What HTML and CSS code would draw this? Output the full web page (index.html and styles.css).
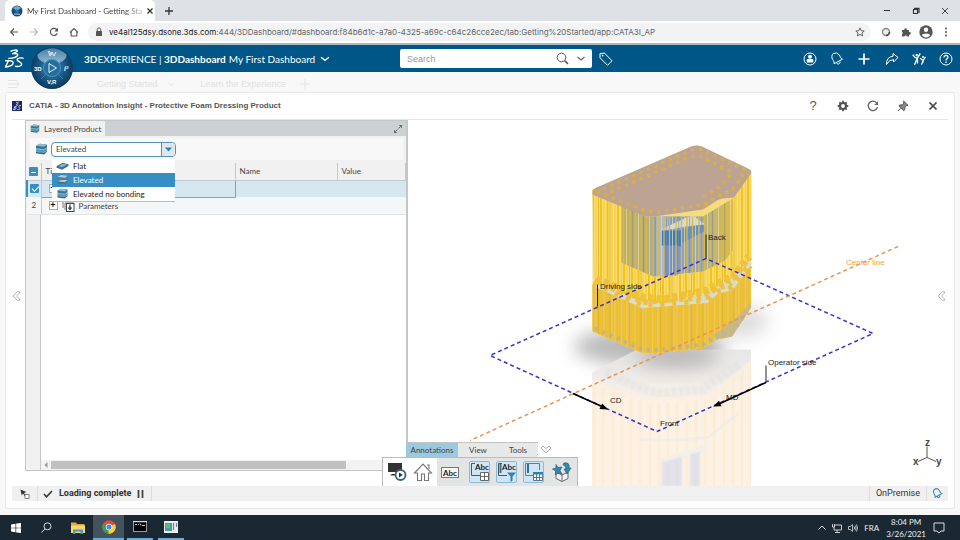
FILE: index.html
```
<!DOCTYPE html>
<html lang="en">
<head>
<meta charset="utf-8">
<meta name="viewport" content="width=device-width, initial-scale=1">
<title>My First Dashboard - Getting Started</title>
<link rel="stylesheet" href="styles.css">
</head>
<body>
<div class="tabstrip">
  <div class="browser-tab">
    <svg class="favicon" viewBox="0 0 12 12"><circle cx="6" cy="6" r="5.5" fill="#174a75"/><path d="M2 3a5 5 0 0 1 8 0L6 6z" fill="#78a9cb"/><circle cx="6" cy="6" r="1.8" fill="#2b79ad"/><path d="M3 9l6 .2" stroke="#b9d5e6"/></svg>
    <span class="browser-title">My First Dashboard - Getting Sta</span>
    <button class="icon-btn" aria-label="Close tab"><svg width="8" height="8" viewBox="0 0 8 8"><path d="M1.5 1.5l5 5m0-5l-5 5" stroke="#333" stroke-width="1.3"/></svg></button>
  </div>
  <button class="icon-btn new-tab" aria-label="New tab"><svg width="8" height="8" viewBox="0 0 8 8"><path d="M4 0v8M0 4h8" stroke="#333" stroke-width="1.3"/></svg></button>
  <div class="window-buttons">
    <button class="icon-btn" aria-label="Minimize"><svg width="8" height="8" viewBox="0 0 8 8"><path d="M1 3.5h6" stroke="#333"/></svg></button>
    <button class="icon-btn" aria-label="Restore"><svg width="8" height="8" viewBox="0 0 8 8"><path d="M1.5 2.5h4v4h-4zM2 1.3h5V6" fill="none" stroke="#333" stroke-width="1.2"/></svg></button>
    <button class="icon-btn" aria-label="Close"><svg width="8" height="8" viewBox="0 0 8 8"><path d="M1 1l6 6m0-6L1 7" stroke="#333" stroke-width=".9"/></svg></button>
  </div>
</div>
<div class="browser-bar">
  <div class="nav-buttons">
    <button class="icon-btn" aria-label="Back"><svg width="10" height="10" viewBox="0 0 10 10"><path d="M9 5H1.5M5 1.5L1.500 5 5 8.500" fill="none" stroke="#555" stroke-width="1.1"/></svg></button>
    <button class="icon-btn" aria-label="Forward"><svg width="10" height="10" viewBox="0 0 10 10"><path d="M1 5h7.500M5 1.500L8.500 5 5 8.500" fill="none" stroke="#b5b7b9" stroke-width="1.100"/></svg></button>
    <button class="icon-btn" aria-label="Reload"><svg width="10" height="10" viewBox="0 0 10 10"><path d="M8.300 6.300A3.600 3.600 0 1 1 8 2.900" fill="none" stroke="#555" stroke-width="1.200"/><path d="M9 .8v3.700H5.400z" fill="#555"/></svg></button>
    <button class="icon-btn" aria-label="Home"><svg width="10" height="10" viewBox="0 0 10 10"><path d="M1 5.500L5 1.500l4 4M2.200 5v4h5.600V5" fill="none" stroke="#555" stroke-width="1.100"/></svg></button>
  </div>
  <div class="address">
    <svg width="8" height="10" viewBox="0 0 8 10"><rect x="1" y="4" width="6" height="5" rx=".6" fill="#555"/><path d="M2.300 4V2.600a1.700 1.700 0 0 1 3.400 0V4" fill="none" stroke="#555"/></svg>
    <p class="url"><b>ve4al125dsy.dsone.3ds.com</b>:444/3DDashboard/#dashboard:f84b6d1c-a7a0-4325-a69c-c64c26cce2ec/tab:Getting%20Started/app:CATA3I_AP</p>
    <button class="icon-btn" aria-label="Bookmark"><svg width="10" height="10" viewBox="0 0 10 10"><path d="M5 .9l1.200 2.800 3 .3-2.300 2 .8 3L5 7.400 2.300 9l.8-3-2.300-2 3-.3z" fill="none" stroke="#555" stroke-width=".9"/></svg></button>
  </div>
  <div class="extensions">
    <button class="icon-btn" aria-label="Extension"><svg width="10" height="10" viewBox="0 0 10 10"><circle cx="5" cy="5" r="3.500" fill="#eee" stroke="#888" stroke-width="1.400"/><path d="M8.500 5A3.500 3.500 0 0 1 5 8.500" fill="none" stroke="#444" stroke-width="1.500"/></svg></button>
    <button class="icon-btn" aria-label="Extensions"><svg width="10" height="10" viewBox="0 0 10 10"><path d="M1 3h2.300a1.400 1.400 0 1 1 2.700 0H8v2a1.400 1.400 0 1 1 0 2.700V9.500H6a1.300 1.300 0 0 0-2.500 0H1V7.300a1.300 1.300 0 0 0 0-2.300z" fill="#555"/></svg></button>
    <button class="icon-btn" aria-label="Profile"><svg width="14" height="14" viewBox="0 0 14 14"><circle cx="7" cy="7" r="6.700" fill="#54575b"/><circle cx="7" cy="4.800" r="2.200" fill="#fff"/><path d="M2.700 10a5 3.200 0 0 1 8.600 0 5 5 0 0 1-8.600 0" fill="#fff"/></svg></button>
    <button class="icon-btn" aria-label="Menu"><svg width="4" height="10" viewBox="0 0 4 10"><g fill="#555"><circle cx="2" cy="1.500" r="1"/><circle cx="2" cy="5" r="1"/><circle cx="2" cy="8.500" r="1"/></g></svg></button>
  </div>
</div>
<header class="topbar">
  <svg class="ds-logo" viewBox="0 0 20 20"><g fill="none" stroke="#fff" stroke-width="1.400" stroke-linecap="round" stroke-linejoin="round"><path d="M7 2.200c3-1.400 6-1.400 6.300-.6.300 1-2.300 2.300-4.800 3 3.600-.2 5.500.3 5.300 1.300-.4 2-4.800 3.400-9 3.500"/><path d="M4.500 11.500L1.500 18c4.200-.1 7.800-1.800 7.700-4.400-.1-1.900-3.300-2.300-7.500-1.800"/><path d="M19 9.200c-2.800-.8-5.900 0-5.900 1.600 0 1.500 4.700 2.400 4.600 4.400-.1 1.700-3 2.700-6.200 2.100"/></g></svg>
  <button class="compass" aria-label="Compass">
    <svg width="44" height="44" viewBox="0 0 44 44">
      <defs><radialGradient id="orb" cx=".5" cy=".48" r=".55"><stop offset="0" stop-color="#4d9bc4"/><stop offset=".55" stop-color="#18598a"/><stop offset="1" stop-color="#0b3456"/></radialGradient><linearGradient id="cap" x2="0" y2="1"><stop offset="0" stop-color="#4d84a8"/><stop offset="1" stop-color="#9ec6db"/></linearGradient></defs>
      <circle cx="22" cy="22" r="21" fill="url(#orb)"/>
      <path d="M7.500 8.500a20 20 0 0 1 29 0c.6 3-3 7-7.800 8.600a9.500 9.500 0 0 0-13.400 0C10 15 7 12 7.500 8.500z" fill="url(#cap)" opacity=".9"/>
      <circle cx="22" cy="22" r="8.500" fill="#236e9d" stroke="#4f91b8"/>
      <path d="M15 29l-4 4m18-4l4 4M14 16l-3-3m19 3l3-3" stroke="#508fb5" stroke-width=".7"/>
      <path d="M19 17.500v9l7.500-4.500z" fill="none" stroke="#fff" stroke-width=".9"/>
      <g fill="#fff"><text x="4" y="25" font-size="6" font-weight="bold">3D</text><text x="17" y="38" font-size="6" font-weight="bold">V,R</text><text x="34" y="25" font-size="7" font-weight="bold" font-style="italic">i²</text></g>
      <path d="M18 5l2 5 2-4 2 4 2-4M19 5l3 4" stroke="#dcebf2" fill="none"/>
    </svg>
  </button>
  <h1 class="brand"><b>3D</b>EXPERIENCE | <b>3DDashboard</b></h1>
  <button class="dash-name">My First Dashboard <svg width="10" height="6" viewBox="0 0 10 6"><path d="M1 1.300l4 3 4-3" fill="none" stroke="#fff" stroke-width="1.400"/></svg></button>
  <form class="search">
    <input type="search" placeholder="Search" aria-label="Search">
    <button type="button" class="icon-btn" aria-label="Run search"><svg width="13" height="13" viewBox="0 0 13 13"><circle cx="5.500" cy="5.500" r="4.300" fill="none" stroke="#555"/><path d="M8.500 8.500l3.500 3.500" stroke="#555" stroke-width="1.600"/></svg></button>
    <button type="button" class="icon-btn" aria-label="Search options"><svg width="8" height="6" viewBox="0 0 8 6"><path d="M.5 1l3.500 3 3.500-3" fill="none" stroke="#666" stroke-width="1.200"/></svg></button>
  </form>
  <button class="icon-btn tag" aria-label="Tags"><svg width="14" height="14" viewBox="0 0 14 14"><path d="M1 1.500l4.500-.4 7.500 7.700-4.500 4.500L1 5.800z" fill="none" stroke="#fff"/><circle cx="3.600" cy="3.600" r=".9" fill="#fff"/></svg></button>
  <nav class="top-icons" aria-label="User tools">
    <button class="icon-btn" aria-label="Profile"><svg width="14" height="14" viewBox="0 0 14 14"><circle cx="7" cy="7" r="6" fill="none" stroke="#fff"/><circle cx="7" cy="4.800" r="2" fill="#fff"/><path d="M3.700 10.500V8.200q0-1.200 1.300-1.200h4q1.300 0 1.300 1.200v2.300z" fill="#fff"/></svg></button>
    <button class="icon-btn" aria-label="Notifications"><svg width="14" height="14" viewBox="0 0 14 14"><path d="M3.200 1.600q3.500-2 6 1.200c1.500 2 .8 3.500 3.300 4.400L4 11.700c.7-2.600-1.500-3.600-2-5.700-.4-2 .2-3.500 1.200-4.400zM6.500 11c1.500 2 3.800 1 3.500-1.500" fill="none" stroke="#fff"/></svg></button>
    <button class="icon-btn" aria-label="Add"><svg width="14" height="14" viewBox="0 0 14 14"><path d="M7 1.500v11M1.500 7h11" stroke="#fff" stroke-width="1.700"/></svg></button>
    <button class="icon-btn" aria-label="Share"><svg width="14" height="14" viewBox="0 0 14 14"><path d="M8 1.500l5 4-4.500 4.500V7.600Q4 7.500 1.500 12.500 1.200 5 8 4.200z" fill="none" stroke="#fff"/></svg></button>
    <button class="icon-btn" aria-label="Communities"><svg width="14" height="14" viewBox="0 0 14 14"><path d="M.7 2.700q2 3.300 4.800 3.800M8.300 1.500Q4.500 6 2.500 13m3-6.500v5M8.300 6q1 2 2.700 2.200M13.500 4.800q-2.500 3-4 7.800M11 8.200v2.600" fill="none" stroke="#fff" stroke-width="1.300"/><circle cx="4.700" cy="3" r="1.200" fill="#fff"/><circle cx="11" cy="5" r="1" fill="#fff"/></svg></button>
    <button class="icon-btn" aria-label="Help"><svg width="14" height="14" viewBox="0 0 14 14"><circle cx="7" cy="7" r="6" fill="none" stroke="#fff"/><path d="M5 5.500C5 2.600 9.300 2.800 9 5.500 8.800 6.800 7 6.800 7 8.400M7 9.500v1.500" fill="none" stroke="#fff" stroke-width="1.300"/></svg></button>
  </nav>
</header>
<nav class="dash-tabs" aria-label="Dashboard tabs">
  <svg width="12" height="10" viewBox="0 0 12 10"><path d="M0 1.500h8M0 5h10M0 8.500h8M8 1l3 4-3 4" fill="none" stroke="#e3e3e3"/></svg>
  <a href="#" class="dash-current">Getting Started</a>
  <svg width="7" height="5" viewBox="0 0 7 5"><path d="M.5 1l3 2.500L6.500 1" fill="none" stroke="#e3e3e3"/></svg>
  <a href="#" class="dash-next">Learn the Experience</a>
  <svg width="10" height="10" viewBox="0 0 10 10"><path d="M5 0v10M0 5h10" stroke="#e3e3e3"/></svg>
</nav>

<main class="widget">
  <div class="widget-head">
    <svg class="app-icon" viewBox="0 0 10 10"><rect width="10" height="10" fill="#1b2a70"/><path d="M4 1.500q3-.6 2.300.4T4.500 3.500q2 0 .6 1.200T2.500 5.500M2.700 6L1.500 8.700q3 0 2.700-2zM9 4.500q-2.600-.2-2.200 1T8 7.700q-.6 1-2.600.8" fill="none" stroke="#fff" stroke-width=".7"/></svg>
    <h2>CATIA - 3D Annotation Insight - Protective Foam Dressing Product</h2>
    <div class="widget-tools">
      <button class="help-btn">?</button>
      <button class="icon-btn" aria-label="Settings"><svg width="12" height="12" viewBox="0 0 12 12"><circle cx="6" cy="6" r="3" fill="none" stroke="#555" stroke-width="2.200"/><path d="M6 .7v2M6 9.300v2M.7 6h2M9.300 6h2M2.300 2.300l1.300 1.300M8.400 8.400l1.300 1.300M9.700 2.300L8.400 3.600M3.600 8.400L2.300 9.700" stroke="#555" stroke-width="1.800"/></svg></button>
      <button class="icon-btn" aria-label="Refresh"><svg width="12" height="12" viewBox="0 0 12 12"><path d="M10.500 7A4.700 4.700 0 1 1 9.500 2.800" fill="none" stroke="#666" stroke-width="1.300"/><path d="M11 1v4H7.300z" fill="#666"/></svg></button>
      <button class="icon-btn" aria-label="Pin"><svg width="12" height="12" viewBox="0 0 12 12"><path d="M6.500 1l4.500 4.300-1.300.4-1.900 1.800-.1 2.400-1 .8L2 6l.8-1 2.500-.2L7 3zM3.700 8.200L1 11" fill="#888" stroke="#555"/></svg></button>
      <button class="icon-btn" aria-label="Close widget"><svg width="10" height="10" viewBox="0 0 10 10"><path d="M1.500 1.500l7 7m0-7l-7 7" stroke="#444" stroke-width="1.700"/></svg></button>
    </div>
  </div>

  <div class="workspace">
    <button class="edge-toggle edge-left" aria-label="Show left panel"><svg width="9" height="10" viewBox="0 0 9 10"><path d="M5.500.7L1 5l4.500 4.300h2V8L4.500 5l3-3V.7z" fill="#fff" stroke="#aaa" stroke-width=".9"/></svg></button>
    <section class="panel">
      <div class="panel-tabs">
        <button class="panel-tab"><svg width="10" height="11" viewBox="0 0 13 12"><use href="#layers"/></svg>Layered Product</button>
        <button class="icon-btn expand" aria-label="Expand"><svg width="8" height="8" viewBox="0 0 8 8"><path d="M4.800 0H8v3.200zM0 4.800V8h3.200z" fill="#666"/><path d="M1.500 6.500l5-5" stroke="#666" stroke-dasharray="2.800 1.500"/></svg></button>
      </div>
      <div class="panel-tools">
        <svg width="13" height="12" viewBox="0 0 13 12"><g id="layers"><path d="M1 8l3-1.500 8 .3v2L9 11.500 1 10.300z" fill="#2f6684"/><path d="M1 5.500L4 4l8 .3v2.400L9 9 1 8z" fill="#4b9bc2"/><path d="M1 2.800L5 .8l7 .9v2.500L9 6.300l-8-1z" fill="#3a7391"/><path d="M1 2.800L5 .8l7 .9-3 2z" fill="#8abed7"/><path d="M1 5.800l8 .9 3-1.900M1 8.500l8 .9 3-2" fill="none" stroke="#b9d8e6" stroke-width=".6"/></g></svg>
        <div class="combo">
          <input type="text" value="Elevated" aria-label="View mode">
          <button aria-label="Open list"><svg width="7" height="5" viewBox="0 0 7 5"><path d="M0 .5h7L3.500 4.500z" fill="#2c7eb4"/></svg></button>
          <ul class="menu" role="listbox" aria-label="View modes">
            <li role="option"><svg width="13" height="11" viewBox="0 0 13 12"><path d="M0 6.500L7 3l6 1.500v2L6 10.500 0 8.500z" fill="#3b718e"/><path d="M2 6.500L7.500 4l4 1L6 8z" fill="#85b7cf"/></svg>Flat</li>
            <li role="option" aria-selected="true"><svg width="13" height="11" viewBox="0 0 13 12"><path d="M1 3l4-2 7 1v2.500L9 6.500 1 5.500z" fill="#547f97"/><path d="M1 8l4-2 7 .6v2L9 11l-8-1z" fill="#456f87"/><path d="M1 3l4-2 7 1-3 2zM1 8l4-1.500 7 .1L9 9z" fill="#b4cdd9"/></svg>Elevated</li>
            <li role="option"><svg width="13" height="11" viewBox="0 0 13 12"><use href="#layers"/></svg>Elevated no bonding</li>
          </ul>
        </div>
      </div>
      <div class="tree">
        <table>
          <colgroup><col class="col-check"><col class="col-title"><col class="col-name"><col></colgroup>
          <thead><tr><th><input type="checkbox" class="mixed" aria-label="Select all"></th><th>Title</th><th>Name</th><th>Value</th></tr></thead>
          <tbody>
            <tr class="picked"><td><input type="checkbox" checked aria-label="Select row 1"></td><td class="focused"><button class="toggle" aria-label="Collapse">+</button></td><td></td><td></td></tr>
            <tr class="alt"><td>2</td><td><div class="node"><button class="toggle" aria-label="Expand">+</button><svg width="13" height="12" viewBox="0 0 13 12"><path d="M1 8V1h8M3 10V3h9" fill="none" stroke="#777"/><rect x="4.500" y="3.500" width="7.500" height="8" fill="#fff" stroke="#444"/><path d="M8 4.500V9M6.500 7.500L8 9.500l1.500-2" stroke="#345" fill="none" stroke-width="1.300"/></svg>Parameters</div></td><td></td><td></td></tr>
          </tbody>
        </table>
        <div class="tree-blank"></div>
        <div class="scroll"><svg width="4" height="6" viewBox="0 0 4 6"><path d="M3.500 0v6L.5 3z" fill="#999"/></svg><div class="scroll-track"><div class="scroll-thumb"></div></div></div>
      </div>
    </section>

    <section class="viewer" aria-label="3D view">
      <svg class="scene" viewBox="408 120 540 367" preserveAspectRatio="xMidYMid slice">
        <defs>
          <filter id="soft" x="-30%" y="-60%" width="160%" height="220%"><feGaussianBlur stdDeviation="9"/></filter>
          <filter id="hazy"><feGaussianBlur stdDeviation="1"/></filter>
          <pattern id="rods" width="31" height="400" patternUnits="userSpaceOnUse" x="592">
            <path d="M1 0v400M9 0v400M15.500 0v400M26 0v400" stroke="#f4c414" stroke-width="2"/>
            <path d="M4 0v400M12 0v400M20 0v400M23 0v400M29.500 0v400" stroke="#f7cf3c" stroke-width="1.300"/>
            <path d="M6.500 0v400M18 0v400" stroke="#dca91a" stroke-width=".7"/>
          </pattern>
          <pattern id="thin" width="23" height="400" patternUnits="userSpaceOnUse" x="622">
            <path d="M1.500 0v400M8 0v400M13.500 0v400M19 0v400" stroke="#dcbb3a" stroke-width="1.300"/>
            <path d="M4.500 0v400M16.500 0v400" stroke="#e3d9a3" stroke-width=".8"/>
            <path d="M10.700 0v400M21.500 0v400" stroke="#7c8da0" stroke-width=".6"/>
          </pattern>
          <pattern id="ghost" width="37" height="400" patternUnits="userSpaceOnUse" x="592">
            <path d="M2 0v400M11 0v400M21 0v400M30 0v400" stroke="#fde9c8" stroke-width="2.500"/><path d="M6 0v400M16 0v400M26 0v400M34 0v400" stroke="#fdf7ee" stroke-width="1"/>
          </pattern>
          <linearGradient id="fade" x2="0" y2="1"><stop offset="0" stop-color="#e6e5e3"/><stop offset=".22" stop-color="#eeebe7"/><stop offset=".4" stop-color="#faf0e3"/><stop offset="1" stop-color="#fcf6ee"/></linearGradient>
          <linearGradient id="glass" x2="1"><stop offset="0" stop-color="#c4ae55"/><stop offset=".25" stop-color="#b3ad86"/><stop offset=".33" stop-color="#8aa3cc"/><stop offset=".5" stop-color="#7d9ad2"/><stop offset=".7" stop-color="#a3aaac"/><stop offset="1" stop-color="#e3bd33"/></linearGradient>
        </defs>
        <ellipse cx="650" cy="347" rx="76" ry="20" fill="#777" opacity=".5" filter="url(#soft)"/>
        <ellipse cx="742" cy="322" rx="26" ry="16" fill="#777" opacity=".25" filter="url(#soft)"/>
        <path d="M592 373l45-23 114 0V490H592z" fill="url(#fade)" opacity=".92"/>
        <path d="M592 380l20 8 38 12 58-4 43-36V490H592z" fill="#fcf0df" opacity=".7"/>
        <path d="M592 384l20 8 38 12 58-4 43-36V490H592z" fill="url(#ghost)" opacity=".55"/>
        <path d="M606 372l30 15 22 7 44-4 38-26" fill="none" stroke="#dedddc" stroke-width="9" stroke-dasharray="5 2" opacity=".4" filter="url(#hazy)"/>
        <path d="M640 440l30 1 38-3 30-24" fill="none" stroke="#efebe8" stroke-width="3" opacity=".7"/>
        <path d="M661 459l46-15v8l-46 14z" fill="#f4efe9"/>
        <path d="M662 463l20-6v30h-20zM690 455l10-3v35h-10z" fill="#c9d3ef" opacity=".5" filter="url(#hazy)"/>
        <ellipse cx="677" cy="357" rx="42" ry="12" fill="#777" opacity=".4" filter="url(#soft)"/>

        <path d="M592.500 190L697 146l54 27v135l-19 29-15 3-14 9-50 5-12-1-48.500-21z" fill="#f7dc7c"/>
        <path d="M621 205l24 12h58l30-18v52l-8 10-22 11-50 5-32-14z" fill="url(#glass)"/>
        <path d="M656 217h12v60h-12z" fill="#b5bfd0" opacity=".8"/>
        <path d="M661 231h20v16l-20-1z" fill="#377bcc"/>
        <path d="M681 230l23-6v8l-23 12z" fill="#6790c4"/>
        <path d="M660 231q22-12 33-15l8 6 5 3q-20 1-30 4z" fill="#d5dad4"/>
        <path d="M664 246h14l0 30h-14z" fill="#6f90d8"/>
        <path d="M621 205l24 12h58l30-18v52l-8 10-22 11-50 5-32-14z" fill="url(#thin)"/>
        <path d="M592.500 190l29 13v60l32 14 50-5 22-11 8-10v-52l18-30v90l-18 28-25 12-64 8-50.500-25z" fill="url(#rods)"/>
        <path d="M593 283l49 17 22 2 43-9 15-9 10-5 19-20v8l-19 26-16 2-9 9-64 6-50-24z" fill="#d9d9ca"/>
        <path d="M596 280l46 18 22 2 43-9 15-9 12-5 15-20" fill="none" stroke="#eec33a" stroke-width="8" stroke-dasharray="5 3"/>
        <path d="M594 283l48 21 22 1 43-6 10-8 15-5 17-21" fill="none" stroke="#edc23a" stroke-width="9" stroke-dasharray="4 5"/>
        <path d="M592.500 286l50 23 64-6 10-9 16-3 18.500-27v44l-19 29-15 3-14 9-50 5-12-1-48.500-21z" fill="#e6bd4c"/>
        <path d="M592.500 286l50 23 64-6 10-9 16-3 18.500-27v44l-19 29-15 3-14 9-50 5-12-1-48.500-21z" fill="url(#rods)" opacity=".75"/>
        <path d="M593 285l50 22 64-5 10-9 15-4 19-26" fill="none" stroke="#dcdccb" stroke-width="3"/>
        <path d="M593 284l50 22 64-5 10-9 15-4 19-26" fill="none" stroke="#edc23a" stroke-width="5" stroke-dasharray="4 8"/>
        <path d="M595 329l45 20 13 2 50-6 14-9 15-3 17-24" fill="none" stroke="#b8b0a0" stroke-width="4" stroke-dasharray="3 5" opacity=".85"/>
        <path d="M717 340l15-3 19-29v-5l-15 16-23 17z" fill="#bcb5a1" opacity=".7"/>
        <path d="M592.500 195v-3q0-2 3-3.500L691 147q5-2 11 0l46 22q4 2 3 5l-17 24-12 1-5 2-14 9-49 7h-9z" fill="#bca392"/>
        <g fill="none" stroke-linecap="round">
          <g stroke="#e7b52d" stroke-width="3.500" stroke-dasharray="0 8"><path id="outer-holes" d="M597 192l94-41 10-1 45 21-14 20-13 5-15 9-48 8-11-2z"/><path id="inner-holes" d="M612 192l79-35 8-1 33 17-13 15-18 11"/></g>
          <g stroke="#bca392" stroke-width="1.500" stroke-dasharray="0 8"><use href="#outer-holes"/><use href="#inner-holes"/></g>
        </g>
        <path d="M597.500 285v22M706 235v24M766 366v17" stroke="#222"/>
        <g fill="none" stroke-width="1.500" stroke-dasharray="4 3">
          <path d="M706 259L490 356l167 76 216-98z" stroke="#3932cb"/>
          <path d="M898 247L470 441" stroke="#e99552"/>
        </g>
        <path d="M573 394l29 13M766 383l-46 21" stroke="#000" stroke-width="1.500"/>
        <path d="M608 410l-8.500-.5 2.700-5.500zM713 407l6-5.700 2.500 5.500z"/>
        <g class="labels"><text x="708" y="240">Back</text><text x="600" y="289">Driving side</text><text x="768" y="365">Operator side</text><text x="610" y="403">CD</text><text x="726" y="400">MD</text><text x="660" y="426">Front</text><text x="846" y="265" class="center-label">Center line</text></g>
        <path d="M927 447v11l-9 4M927 458l9 4" fill="none" stroke="#555"/>
        <g class="axes"><text x="925" y="446">z</text><text x="913" y="465">x</text><text x="936" y="465">y</text></g>
      </svg>
      <button class="edge-toggle edge-right" aria-label="Show right panel"><svg width="9" height="10" viewBox="0 0 9 10"><path d="M5.500.7L1 5l4.500 4.300h2V8L4.500 5l3-3V.7z" fill="#fff" stroke="#aaa" stroke-width=".9"/></svg></button>
    </section>

    <div class="dock">
      <div class="dock-tabs">
        <button class="dock-tab dock-active">Annotations</button><button class="dock-tab">View</button><button class="dock-tab">Tools</button>
        <button class="icon-btn dock-fold" aria-label="Fold"><svg width="12" height="9" viewBox="0 0 12 9"><path d="M1 3L3 1l3 2.500L9 1l2 2-5 5z" fill="#fff" stroke="#aaa"/></svg></button>
      </div>
      <div class="dock-bar">
        <div class="dock-home">
          <button class="icon-btn" aria-label="Play"><svg width="20" height="20" viewBox="0 0 20 20"><path d="M1 1h14v9H1zM5 12h5v1.500H3z" fill="#333"/><circle cx="13.500" cy="13" r="5" fill="#fff" stroke="#35647d" stroke-width="1.800"/><path d="M12 10.500v5l3.700-2.500z" fill="#234"/></svg></button>
          <button class="icon-btn" aria-label="Home"><svg width="20" height="20" viewBox="0 0 20 20"><path d="M1.500 11L10 2l8.500 9h-3v7.500h-4V12h-3v6.500h-4V11zM14 3h2v4" fill="#fff" stroke="#777" stroke-width="1.100"/></svg></button>
        </div>
        <button class="icon-btn dock-text" aria-label="Text annotations"><svg width="18" height="11" viewBox="0 0 18 11"><rect x=".5" y=".5" width="17" height="10" fill="#f7f7f7" stroke="#777"/><text x="2" y="9" class="abc">Abc</text></svg></button>
        <button class="icon-btn dock-on" aria-label="Annotation table"><svg width="20" height="20" viewBox="0 0 20 20"><path d="M5 1.500H1.500v12H10" fill="none" stroke="#555"/><text x="5" y="8" class="abc">Abc</text><path d="M10.500 10.500h8v8h-8zM14.500 10.500v8M10.500 14.500h8" fill="#fff" stroke="#666"/></svg></button>
        <button class="icon-btn dock-on" aria-label="Annotation filter"><svg width="20" height="20" viewBox="0 0 20 20"><path d="M5 1.500H1.500v12H10" fill="none" stroke="#555"/><path d="M3.500 2v9" stroke="#356f8c" stroke-width="2"/><text x="5" y="8" class="abc">Abc</text><path d="M10 10.500h9l-3.500 4v4l-2 1.500v-5.500z" fill="#2e83aa"/></svg></button>
        <button class="icon-btn dock-on" aria-label="Dimension table"><svg width="20" height="20" viewBox="0 0 20 20"><path d="M10 13.500H1.500v-12h14V8" fill="none" stroke="#777"/><path d="M4 2v9" stroke="#356f8c" stroke-width="2"/><path d="M9.500 10.500h9v8h-9zM12.500 10.500v8M15.500 10.500v8M9.500 15.500h9" fill="#fff" stroke="#57798a"/><path d="M9 10h10v2.500H9z" fill="#2e83aa"/></svg></button>
        <button class="icon-btn dock-box" aria-label="Explode"><svg width="20" height="20" viewBox="0 0 20 20"><path d="M4 10l6 3 6-3v6.500L10 19.500l-6-3z" fill="#f5f5f5" stroke="#666"/><path d="M10 13v6" stroke="#666"/><path d="M4 2.500l2 3 4-.5-2 3.500 2 3.500-4-1-2.500 2v-4L.5 7 4 6z" fill="#3387ad" stroke="#2b5e76" stroke-width=".7"/><path d="M12 1q6-1 5 5h2l-4 6-3-5h2q0-4-3-4z" fill="#3387ad" stroke="#2b5e76" stroke-width=".7"/></svg></button>
      </div>
    </div>
  </div>

  <footer class="status">
    <button class="icon-btn status-pick" aria-label="Selection mode"><svg width="10" height="10" viewBox="0 0 10 10"><path d="M.5.500l6 2.500-2.500 1 2 3-1 .5-2-3-1.300 2z" fill="#333"/><rect x="5" y="5.500" width="4" height="4" fill="#fff" stroke="#666" stroke-width=".8"/></svg></button>
    <div class="status-text"><svg width="10" height="8" viewBox="0 0 10 8"><path d="M1 4l2.500 2.800L9 1" fill="none" stroke="#333" stroke-width="1.500"/></svg><span>Loading complete</span><svg width="7" height="8" viewBox="0 0 7 8"><path d="M1.500 0v8M5.500 0v8" stroke="#444" stroke-width="1.800"/></svg></div>
    <span class="status-mid"></span>
    <span class="status-site">OnPremise</span>
    <button class="icon-btn status-bell" aria-label="Notifications"><svg width="11" height="11" viewBox="0 0 14 14"><path d="M3.200 1.600q3.500-2 6 1.200c1.500 2 .8 3.500 3.300 4.400L4 11.700c.7-2.600-1.500-3.600-2-5.700-.4-2 .2-3.500 1.200-4.400zM6.500 11c1.500 2 3.800 1 3.500-1.500" fill="none" stroke="#3389bd" stroke-width="1.300"/></svg></button>
  </footer>
</main>

<div class="taskbar">
  <button class="task" aria-label="Start"><svg width="10" height="10" viewBox="0 0 10 10"><path d="M0 1.400l4.500-.7v4H0zM5.200.6L10 0v4.700H5.200zM0 5.300h4.500v4L0 8.600zM5.200 5.300H10V10l-4.800-.6z" fill="#fff"/></svg></button>
  <button class="task" aria-label="Search"><svg width="11" height="11" viewBox="0 0 11 11"><circle cx="6.500" cy="4.300" r="3.500" fill="none" stroke="#ddd"/><path d="M4 6.800L.5 10.500" stroke="#ddd"/></svg></button>
  <button class="task" aria-label="Files"><svg width="14" height="12" viewBox="0 0 14 12"><path d="M0 .500h5l1 1.500h7.500V11H0z" fill="#e4aa35"/><path d="M0 3.500h14V11H0z" fill="#ffd66b"/><path d="M2 12V7.500h10V12H9.500V9.500h-5V12z" fill="#4597cc"/></svg></button>
  <button class="task task-active" aria-label="Chrome"><svg width="14" height="14" viewBox="0 0 14 14"><circle cx="7" cy="7" r="6.700" fill="#dd4b3e"/><path d="M7 7L1.200 3.700A6.700 6.700 0 0 0 6.500 13.700z" fill="#2ea457"/><path d="M7 7l6-3a6.700 6.700 0 0 1-6.500 9.700z" fill="#fdd13a"/><circle cx="7" cy="7" r="3.200" fill="#fff"/><circle cx="7" cy="7" r="2.500" fill="#4688e8"/></svg></button>
  <button class="task" aria-label="Command prompt"><span class="task-line"><svg width="14" height="11" viewBox="0 0 14 11"><rect x=".5" y=".5" width="13" height="10" fill="#050505" stroke="#999"/><path d="M0 .500h14" stroke="#ddd" stroke-width="1.400"/><path d="M2 3.500h2M5 3.500h1M7 2.500l1 2M9 4.500h3" stroke="#ddd" stroke-width=".9"/></svg></span></button>
  <button class="task" aria-label="Report"><span class="task-line"><svg width="14" height="12" viewBox="0 0 14 12"><path d="M0 0h14v12H0z" fill="#eceff0"/><path d="M1 2h7v8H1z" fill="#4b9ca2"/><path d="M2 3h4v4H2z" fill="#62b985"/><path d="M9.500 2v7M12.500 2v4" stroke="#68829a" stroke-width="1.200"/></svg></span></button>
  <div class="tray">
    <svg width="8" height="10" viewBox="0 0 8 10"><path d="M.5 6.500L4 3l3.500 3.500" fill="none" stroke="#ddd"/></svg>
    <svg width="10" height="10" viewBox="0 0 10 10"><path d="M3 2h6.500v5H2V4M.5 1v3h2V1M5 7v2M3 9.500h5" fill="none" stroke="#ddd" stroke-width=".9"/></svg>
    <svg width="10" height="10" viewBox="0 0 10 10"><path d="M.5 3.500h1.800L4.500 1.500v7L2.300 6.500H.5zM6 3.500q1 1.500 0 3M7.300 2.500q1.600 2.500 0 5M8.500 1.500q2 3.500 0 7" fill="none" stroke="#ddd" stroke-width=".8"/></svg>
    <span class="lang">FRA</span>
    <time class="clock" datetime="2021-03-26T20:04">8:04 PM<br>3/26/2021</time>
    <svg class="notes" viewBox="0 0 12 12"><path d="M1 1h10v8H8L6 11 4 9H1z" fill="none" stroke="#ddd"/></svg>
  </div>
</div>
</body>
</html>
```
FILE: styles.css
```
* { box-sizing: border-box; }
body { margin: 0; min-height: 100vh; display: flex; flex-direction: column; background: #f8f8f8; color: #444; font: 8px/12px "Liberation Sans", Arial, sans-serif; }
button, input { font: inherit; color: inherit; }
button { padding: 0; border: 0; background: none; }
svg { display: block; flex: none; }
h1, h2, p, ul { margin: 0; padding: 0; }
a { color: inherit; text-decoration: none; }
.icon-btn { display: grid; place-items: center; }

/* Browser frame */
.tabstrip { display: flex; align-items: center; height: 21px; padding-left: 5px; background: #dee1e6; }
.browser-tab { display: flex; align-items: center; gap: 4px; width: 150px; height: 21px; padding: 0 6px; background: #fff; border-radius: 5px 5px 0 0; font: 8px/12px Lato, sans-serif; }
.favicon { width: 12px; height: 12px; }
.browser-title { flex: 1; white-space: nowrap; mask-image: linear-gradient(90deg, #000 85%, rgb(0 0 0 / 30%)); }
.new-tab { margin-left: 10px; }
.window-buttons { display: flex; gap: 21px; margin-left: auto; padding-right: 11px; }
.browser-bar { display: flex; align-items: center; height: 24px; background: #fff; border-bottom: 2px solid #a9b9c2; }
.nav-buttons { display: flex; gap: 10px; padding: 0 9px; }
.address { display: flex; flex: 1; min-width: 0; align-items: center; gap: 6px; height: 18px; padding: 0 6px 0 7px; background: #f1f3f4; border-radius: 9px; }
.url { flex: 1; min-width: 0; overflow: hidden; white-space: nowrap; font: 8px/14px Inter, sans-serif; color: #666; }
.url b { font-weight: 400; color: #222; }
.extensions { display: grid; grid-template-columns: repeat(4, 20px); align-items: center; padding: 0 4px 0 5px; }

/* Platform bar */
.topbar { position: relative; display: flex; align-items: center; height: 27px; background: #005686; color: #fff; font: 10px/14px Lato, sans-serif; }
.ds-logo { width: 20px; height: 20px; margin-left: 4px; }
.compass { position: absolute; left: 30px; top: 1px; z-index: 2; font-family: "Liberation Sans", sans-serif; }
.brand { margin-left: 60px; font: inherit; white-space: nowrap; }
.dash-name { display: flex; align-items: center; gap: 5px; margin-left: 3px; white-space: nowrap; }
.search { display: flex; align-items: center; gap: 8px; width: 192px; height: 19px; margin-left: auto; padding: 0 7px; background: #fff; border-radius: 2px; color: #888; }
.search input { flex: 1; min-width: 0; border: 0; padding: 0; background: none; outline: 0; font: 9px/14px "Liberation Sans", sans-serif; }
.search input::placeholder { color: #999; }
.tag { margin-left: 7px; }
.top-icons { display: grid; grid-template-columns: repeat(6, 1fr); width: 164px; margin-left: 183px; }

.dash-tabs { display: flex; align-items: center; height: 20px; padding: 4px 8px 0; color: #e1e1e1; font-size: 9px; }
.dash-current { margin-left: 77px; margin-right: 10px; }
.dash-next { margin-left: 26px; margin-right: 14px; }

/* Widget */
.widget { display: flex; flex: 1; flex-direction: column; margin: 0 5px 6px; padding: 0 6px 7px; background: #fff; border: 1px solid #e9e9e9; border-radius: 2px; }
.widget-head { display: flex; align-items: center; height: 27px; border-bottom: 1px solid #e6e6e6; }
.app-icon { width: 10px; height: 10px; }
.widget-head h2 { margin-left: 7px; font: bold 8px/12px "Liberation Sans", sans-serif; color: #555; white-space: nowrap; }
.widget-tools { display: grid; grid-template-columns: repeat(5, 30px); align-items: center; margin-left: auto; }
.help-btn { color: #555; font-size: 13px; line-height: 14px; }
.workspace { position: relative; flex: 1; display: grid; grid-template-columns: 13px minmax(0, 383fr) minmax(0, 540fr); }
.edge-left { align-self: center; margin-bottom: 15px; }
.panel { display: flex; flex-direction: column; margin-bottom: 15px; border: 1px solid #c4c7c8; border-width: 1px 2px 1px 1px; background: #f1f1f1; font-family: Lato, sans-serif; }
.panel-tabs { display: flex; height: 15px; background: #cdd1d2; }
.panel-tab { display: flex; align-items: center; gap: 4px; padding: 0 4px; background: #f1f1f1; color: #444; }
.expand { margin-left: auto; padding-right: 4px; }
.panel-tools { display: flex; align-items: center; gap: 3px; height: 22px; margin: 2px 3px; padding-left: 6px; background: #f8f8f8; }
.combo { position: relative; display: flex; width: 125px; height: 15px; border: 1px solid #5594b8; border-radius: 4px; background: #fff; }
.combo input { flex: 1; min-width: 0; padding: 0 4px; border: 0; background: none; color: #444; outline: 0; }
.combo button { display: grid; place-items: center; width: 14px; background: #dfe7ec; border-left: 1px solid #5594b8; border-radius: 0 3px 3px 0; }
.menu { position: absolute; top: 16px; left: 0; right: 0; z-index: 3; background: #fff; border-bottom: 1px solid #bbb; list-style: none; color: #222; }
.menu li { display: flex; align-items: center; gap: 4px; height: 14px; padding-left: 4px; }
.menu li[aria-selected] { background: #368ec4; color: #fff; }
.tree { flex: 1; display: flex; flex-direction: column; padding-top: 1px; }
table { width: 100%; border-collapse: collapse; table-layout: fixed; color: #444; }
.col-check { width: 14px; }
.col-title { width: 194px; }
.col-name { width: 102px; }
th { height: 17px; padding: 0 4px; border-right: 1px solid #c5c8c9; border-bottom: 1px solid #c5c8c9; background: #f1f1f1; text-align: left; font-weight: 400; }
td { height: 17px; padding: 0 4px; }
th:first-child, td:first-child { padding: 0; text-align: center; background: #f1f1f1; border-right: 1px solid #c5c8c9; }
.picked td { background: #d5e7f0; }
.picked td:first-child { background: #d5e7f0; border-left: 2px solid #368ec4; }
.picked .focused { border: 1px solid #6caacb; }
.alt td { background: #f5f6f7; border-bottom: 1px solid #e2e3e4; }
input[type=checkbox] { display: block; appearance: none; width: 9px; height: 9px; margin: 0 auto; padding: 2px; background: #368ec4; border-radius: 1px; }
input[type=checkbox]::after { content: ""; display: block; width: 6px; height: 3px; border: solid #fff; border-width: 0 0 1px 1px; rotate: -45deg; }
input.mixed::after { height: 3px; width: 5px; border-width: 0 0 1px; rotate: 0deg; }
.node { display: flex; align-items: center; gap: 4px; }
.toggle { display: block; width: 9px; height: 9px; margin-left: 3px; border: 1px solid #aaa; background: #fff; color: #111; font: bold 9px/7px "Liberation Sans", sans-serif; }
.tree-blank { flex: 1; margin-left: 14px; background: #fff; border-left: 1px solid #c5c8c9; }
.scroll { display: flex; align-items: center; gap: 3px; height: 10px; margin-left: 14px; padding-left: 3px; background: #f3f3f3; border-left: 1px solid #c5c8c9; }
.scroll-track { flex: 1; }
.scroll-thumb { width: 83%; height: 8px; background: #c1c1c1; }

.viewer { position: relative; background: #fff; overflow: hidden; }
.scene { position: absolute; width: 100%; height: 100%; }
.labels { font-size: 8px; fill: #222; }
.center-label { fill: #f2a43a; }
.axes { font-size: 10px; font-weight: bold; fill: #444; }
.edge-right { position: absolute; right: 2px; top: 50%; margin-top: -12px; }

.dock { position: absolute; left: 50%; bottom: 0; width: 196px; transform: translateX(-50%); }
.dock-tabs { display: flex; width: max-content; margin-left: 24px; font-family: Lato, sans-serif; }
.dock-tab { width: 40px; height: 15px; background: #e7e8e8; border-top: 1px solid #c3c3c3; color: #444; }
.dock-active { width: 52px; background: #9bc9df; }
.dock-fold { margin-left: 2px; }
.dock-bar { display: flex; align-items: center; gap: 6px; height: 29px; background: #e3e4e4; border: 1px solid #bbb; border-bottom: 0; }
.dock-home { display: flex; gap: 6px; height: 28px; padding: 0 4px; background: #fff; align-items: center; }
.dock-text { margin-right: 4px; margin-left: -2px; }
.dock-on { width: 21px; height: 22px; border: 1px solid #8cbad8; border-radius: 2px; background: #cfe5f5; }
.dock-box { margin-left: 2px; }
.abc { font: bold 8px Lato, sans-serif; fill: #222; }

.status { display: flex; height: 15px; background: #f0f0f0; color: #333; font: bold 9px/15px Roboto, sans-serif; }
.status-pick { width: 26px; border-right: 1px solid #ddd; }
.status-text { display: flex; align-items: center; gap: 6px; padding: 0 7px 0 5px; border-right: 1px solid #ddd; }
.status-mid { flex: 1; }
.status-site { padding: 0 6px; border-left: 1px solid #ddd; border-right: 1px solid #ddd; font-weight: 400; }
.status-bell { width: 21px; }

/* Desktop taskbar */
.taskbar { display: flex; height: 25px; background: #1a2833; color: #eee; }
.task { display: grid; place-items: center; width: 31px; }
.task-line { display: grid; place-items: center; width: 26px; height: 25px; border-bottom: 2px solid #6cacdb; }
.task-active { background: #43525d; border-bottom: 2px solid #6cacdb; }
.tray { display: flex; align-items: center; gap: 6px; margin-left: auto; padding-right: 15px; font-family: Lato, sans-serif; }
.clock { margin: 0 1px; text-align: center; }
.notes { width: 12px; height: 12px; }
```
